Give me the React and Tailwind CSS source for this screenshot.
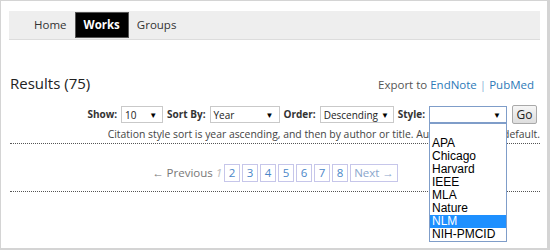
import React from "react";

const font = { fontFamily: "'Open Sans', 'Liberation Sans', sans-serif" };

function FakeSelect({ value, width, focused, children }) {
  return (
    <div className={`relative ${width}`}>
      <div
        className={`h-[17px] flex items-center justify-between gap-[3px] bg-white border pl-[3px] pr-[5px] text-[10px] text-[#222] ${focused ? "border-[#7f9dc9]" : "border-[#c9c9c9]"}`}
      >
        <span className="leading-none">{value}</span>
        <span className="text-[8px] leading-none text-black">▼</span>
      </div>
      {children}
    </div>
  );
}

export default function App() {
  const styles = ["", "APA", "Chicago", "Harvard", "IEEE", "MLA", "Nature", "NLM", "NIH-PMCID"];
  const pages = [2, 3, 4, 5, 6, 7, 8];

  return (
    <div
      className="w-[550px] h-[250px] bg-white border-t border-l border-r-[3px] border-b-2 border-[#d4d4d4] pt-[10px] pl-[8px] pr-[7px] overflow-hidden"
      style={font}
    >
      {/* top nav */}
      <nav className="h-[29px] bg-[#eeeeee] border-b border-[#dcdcdc] flex items-stretch pl-[17px] text-[11.5px]">
        <a className="px-[8px] flex items-center text-[#333]">Home</a>
        <a className="px-[8px] flex items-center bg-black text-white font-bold mt-px mb-px border border-[#555]">Works</a>
        <a className="px-[8px] flex items-center text-[#333]">Groups</a>
      </nav>

      <div className="pl-px">
        <div className="mt-[33px] flex items-end justify-between">
          <h2 className="text-[15px] leading-[20px] text-[#222]">Results (75)</h2>
          <div className="text-[11.5px] leading-[16px] text-[#555] mr-[6px]">
            Export to <a className="text-[#2c7ab8]">EndNote</a>{" "}
            <span className="text-[#8ab4d8]">|</span> <a className="text-[#2c7ab8]">PubMed</a>
          </div>
        </div>

        <div className="mt-[12px] h-[19px] flex items-center justify-end gap-[4px] pr-[3px] text-[10px] text-[#333]">
          <span className="font-bold">Show:</span>
          <FakeSelect value="10" width="w-[42px]" />
          <span className="font-bold">Sort By:</span>
          <FakeSelect value="Year" width="w-[70px]" />
          <span className="font-bold">Order:</span>
          <FakeSelect value="Descending" width="w-[74px]" />
          <span className="font-bold">Style:</span>
          <FakeSelect value="" width="w-[78px]" focused>
            <ul
              className="absolute left-0 top-full w-full bg-white border border-[#7f9dc9] z-10 text-[12px] text-black"
              style={{ fontFamily: "'Liberation Sans', Arial, sans-serif" }}
            >
              {styles.map((s, i) => (
                <li
                  key={i}
                  className={`h-[13px] leading-[13px] pl-[2px] ${s === "NLM" ? "bg-[#1e90ff] text-white" : ""}`}
                >
                  {s || "\u00a0"}
                </li>
              ))}
            </ul>
          </FakeSelect>
          <button className="ml-px h-[19px] w-[25px] border border-[#a9a9a9] rounded-[2px] bg-gradient-to-b from-[#f6f6f6] to-[#dedede] text-[12px] leading-none text-[#222]">
            Go
          </button>
        </div>

        <p className="mt-[3px] text-right text-[10.4px] leading-[14px] text-[#444]">
          Citation style sort is year ascending, and then by author or title. Author sort is the default.
        </p>

        <div className="mt-[2px] border-t border-dotted border-[#555]" />

        <div className="mt-[20px] flex items-center justify-center gap-[2px] text-[11.5px]">
          <span className="text-[#777]">← Previous <i className="text-[#bbb]">1</i></span>
          {pages.map((p) => (
            <a
              key={p}
              className="w-[16px] h-[18px] flex items-center justify-center border border-[#c6c6ea] text-[#4a86c8]"
            >
              {p}
            </a>
          ))}
          <a className="h-[18px] px-[3px] flex items-center border border-[#c6c6ea] text-[#8aa6cc]">Next →</a>
        </div>

        <div className="mt-[9px] border-t border-dotted border-[#555]" />
      </div>
    </div>
  );
}
